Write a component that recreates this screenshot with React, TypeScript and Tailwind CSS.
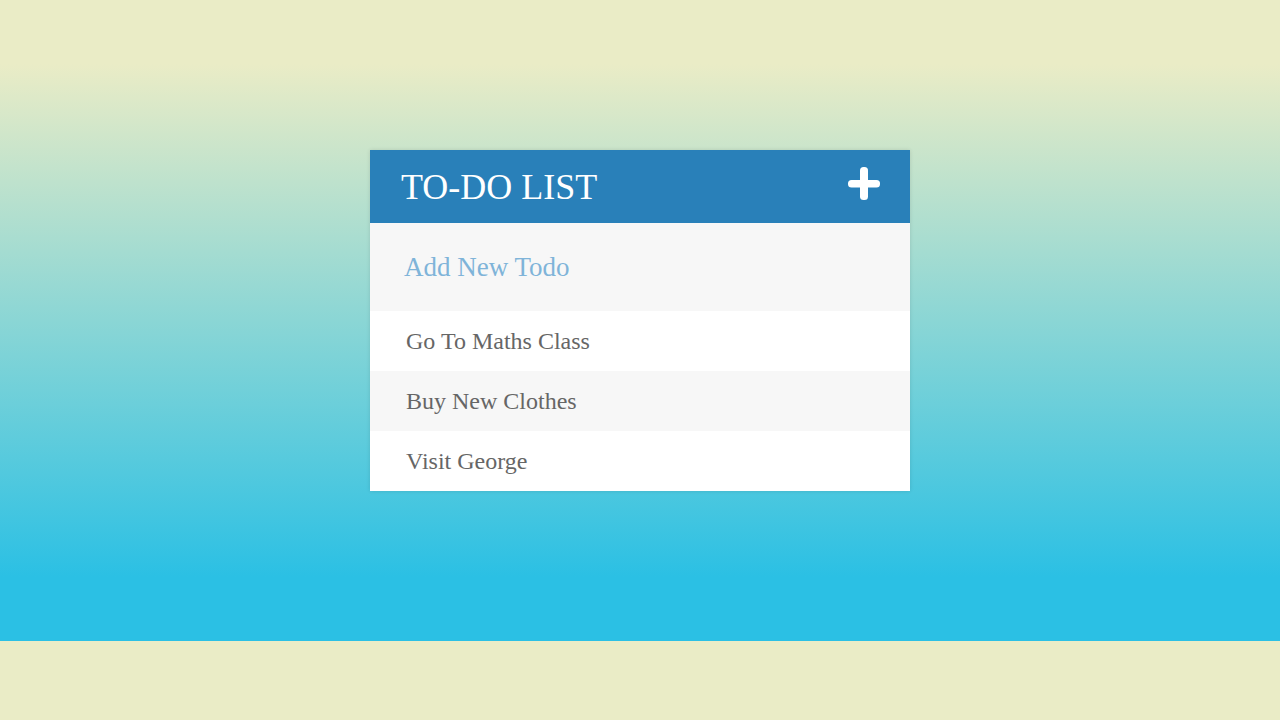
import React from "react";

export default function App() {
  const todos = ["Go To Maths Class", "Buy New Clothes", "Visit George"];
  return (
    <div className="w-[1280px] h-[720px] bg-[#eaecc6] overflow-hidden" style={{ fontFamily: '"Liberation Serif", "Times New Roman", serif' }}>
      <div className="h-[641px] bg-[linear-gradient(to_bottom,#eaecc6_10%,#2bc0e4_90%)] pt-[150px]">
        <div className="w-[540px] mx-auto bg-[#f7f7f7] shadow-[0_0_4px_rgba(0,0,0,0.12)]">
          <div className="bg-[#2980b9] h-[73px] pl-[31px] pr-[30px] flex items-center justify-between">
            <h1 className="text-white text-[36px] leading-none font-normal m-0 pt-[1px]">TO-DO LIST</h1>
            <svg width="32" height="33" viewBox="0 0 32 33" className="mb-[6px]">
              <rect x="12" y="0" width="8" height="33" rx="3.5" fill="white" />
              <rect x="0" y="13" width="32" height="7.5" rx="3.5" fill="white" />
            </svg>
          </div>
          <div className="h-[88px] flex items-center pl-[34px]">
            <span className="text-[27px] text-[#7fb4d9]">Add New Todo</span>
          </div>
          <ul className="m-0 p-0">
            {todos.map((t, i) => (
              <li key={t} className={`h-[60px] leading-[60px] pl-[36px] text-[24px] text-[#666666] ${i % 2 === 1 ? "bg-[#f7f7f7]" : "bg-white"}`}>
                {t}
              </li>
            ))}
          </ul>
        </div>
      </div>
    </div>
  );
}
